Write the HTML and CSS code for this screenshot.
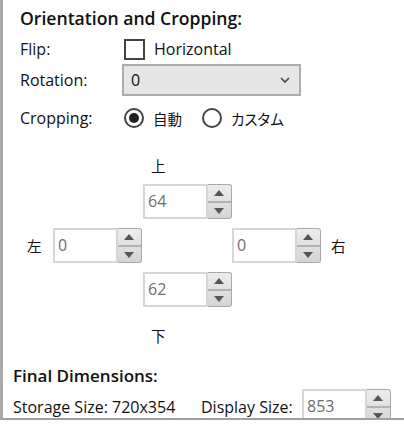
FILE: index.html
```html
<!DOCTYPE html>
<html lang="ja">
  <head>
    <meta charset="UTF-8" />
    <title>Orientation and Cropping</title>
    <link rel="stylesheet" href="styles.css">
  </head>
  <body>
    <div class="panel">
      <div class="orient">
        <h2 class="section-title">Orientation and Cropping:</h2>
        <div class="row row-flip">
          <span class="field-label">Flip:</span>
          <span class="check"></span>
          <span class="opt">Horizontal</span>
        </div>
        <div class="row row-rotation">
          <span class="field-label">Rotation:</span>
          <div class="select">
            <span>0</span>
            <svg class="chevron" width="10" height="6" viewBox="0 0 10 6"><path d="M1 1 L5 5 L9 1" fill="none" stroke="#444" stroke-width="1.6"/></svg>
          </div>
        </div>
        <div class="row row-crop">
          <span class="field-label">Cropping:</span>
          <span class="radio checked"></span>
          <span class="opt cjk">自動</span>
          <span class="radio"></span>
          <span class="opt cjk">カスタム</span>
        </div>
      </div>

      <div class="crop-grid">
        <span class="side side-top">上</span>
        <div class="spin pos-top">
          <div class="spin-input">64</div>
          <div class="spin-btns"><span class="up"></span><span class="down"></span></div>
        </div>
        <span class="side side-left">左</span>
        <div class="spin pos-left">
          <div class="spin-input">0</div>
          <div class="spin-btns"><span class="up"></span><span class="down"></span></div>
        </div>
        <div class="pos-right">
          <div class="spin">
            <div class="spin-input">0</div>
            <div class="spin-btns"><span class="up"></span><span class="down"></span></div>
          </div>
          <span class="side">右</span>
        </div>
        <div class="spin pos-bottom">
          <div class="spin-input">62</div>
          <div class="spin-btns"><span class="up"></span><span class="down"></span></div>
        </div>
        <span class="side side-bottom">下</span>
      </div>

      <div class="final">
        <h3 class="final-title">Final Dimensions:</h3>
        <div class="final-row">
          <span class="storage">Storage Size: 720x354</span>
          <span class="display-label">Display Size:</span>
          <div class="spin">
            <div class="spin-input">853</div>
            <div class="spin-btns"><span class="up"></span><span class="down"></span></div>
          </div>
        </div>
      </div>
    </div>
  </body>
</html>
```

FILE: styles.css
```css
/* General styles */
* {
  box-sizing: border-box;
}

body {
  font-family: "Open Sans", "Noto Sans CJK JP", sans-serif;
  font-size: 16px;
  color: #111;
  margin: 0;
  padding: 0;
  background-color: #fff;
}

.panel {
  height: 420px;
  border-left: 3px solid #a9a9a9;
  border-bottom: 2px solid #a0a0a0;
  overflow: hidden;
}

.cjk {
  font-family: "Noto Sans CJK JP", sans-serif;
  font-size: 14.5px;
  font-feature-settings: "palt";
}

/* Orientation section */
.orient {
  padding-left: 17px;
}

.section-title {
  margin: 0;
  height: 34px;
  padding-top: 4px;
  font-size: 17.6px;
  font-weight: 600;
  line-height: 28px;
}

.row {
  display: flex;
  align-items: center;
}

.row-flip {
  height: 30px;
}

.row-rotation {
  height: 32px;
}

.row-crop {
  height: 30px;
  margin-top: 7px;
}

.field-label {
  width: 102px;
  flex: none;
}

.opt {
  margin-left: 9px;
}

.check {
  width: 21px;
  height: 21px;
  margin-left: 2px;
  border: 2px solid #444;
  background: #fff;
}

.select {
  width: 179px;
  height: 32px;
  border: 2px solid #acacac;
  background-color: #e6e6e6;
  display: flex;
  align-items: center;
  justify-content: space-between;
  padding: 0 9px 0 7px;
}

.radio {
  width: 20px;
  height: 20px;
  margin-left: 2px;
  border: 2px solid #444;
  border-radius: 50%;
  background: #fff;
  position: relative;
}

.radio + .opt + .radio {
  margin-left: 20px;
}

.radio.checked::after {
  content: "";
  position: absolute;
  left: 3px;
  top: 3px;
  width: 10px;
  height: 10px;
  border-radius: 50%;
  background: #222;
}

/* Cropping grid */
.crop-grid {
  display: grid;
  margin: 22px 0 0 24px;
  grid-template-columns: 26px 90px 89px auto;
  grid-template-rows: 20px 35px 35px 35px 20px;
  row-gap: 9px;
  align-items: center;
}

.side {
  font-family: "Noto Sans CJK JP", sans-serif;
  font-size: 14.5px;
  line-height: 20px;
}

.side-top {
  grid-column: 3;
  grid-row: 1;
  padding-left: 8px;
  margin-top: 2px;
}

.pos-top {
  grid-column: 3;
  grid-row: 2;
}

.side-left {
  grid-column: 1;
  grid-row: 3;
}

.pos-left {
  grid-column: 2;
  grid-row: 3;
}

.pos-right {
  grid-column: 4;
  grid-row: 3;
  display: flex;
  align-items: center;
  gap: 10px;
}

.pos-bottom {
  grid-column: 3;
  grid-row: 4;
}

.side-bottom {
  grid-column: 3;
  grid-row: 5;
  padding-left: 8px;
  margin-top: 20px;
}

/* Spin box */
.spin {
  display: flex;
  width: 89px;
  height: 35px;
}

.spin-input {
  width: 65px;
  height: 35px;
  border: 2px solid #d6d6d6;
  background: #fff;
  color: #6d6d6d;
  padding-left: 3px;
  line-height: 31px;
}

.spin-btns {
  width: 24px;
  height: 35px;
  display: flex;
  flex-direction: column;
  border: 1px solid #a8a8a8;
  border-left: none;
  border-radius: 0 3px 3px 0;
  background: linear-gradient(#ededed, #d4d4d4);
}

.spin-btns span {
  flex: 1;
  position: relative;
}

.spin-btns .up {
  border-bottom: 2px solid #b3b3b3;
}

.spin-btns span::after {
  content: "";
  position: absolute;
  left: 6px;
  width: 0;
  height: 0;
  border-left: 5px solid transparent;
  border-right: 5px solid transparent;
}

.spin-btns .up::after {
  top: 5px;
  border-bottom: 6px solid #555;
}

.spin-btns .down::after {
  top: 5px;
  border-top: 6px solid #555;
}

/* Final dimensions */
.final {
  padding-left: 10px;
}

.final-title {
  margin: 30px 0 0;
  height: 22px;
  font-size: 17px;
  font-weight: 600;
  line-height: 20px;
}

.final-row {
  display: flex;
  align-items: center;
  margin-top: 1px;
}

.storage {
  width: 188px;
  flex: none;
}

.display-label {
  width: 101px;
  flex: none;
}
```
